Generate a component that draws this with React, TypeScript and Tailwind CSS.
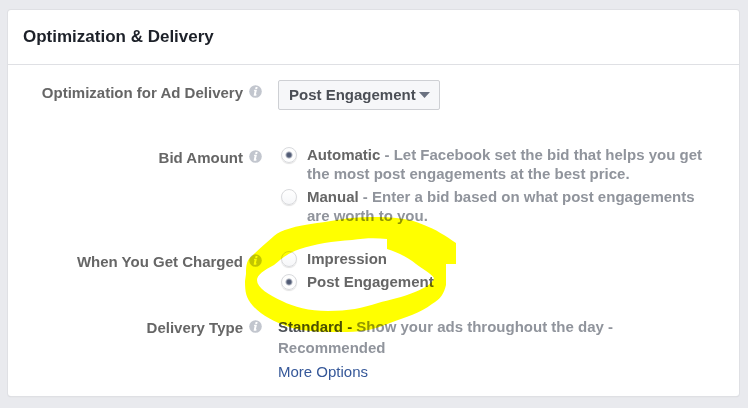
import type { ReactNode } from 'react'

function InfoIcon() {
  return (
    <svg viewBox="0 0 13 13" className="mb-[3px] h-[13px] w-[13px] shrink-0" aria-hidden="true">
      <circle cx="6.5" cy="6.5" r="6.3" fill="#c2c6ce" />
      <path d="M6.6 2h2l-.4 1.9h-2z M5.3 4.8h2.6L6.9 9.3h.7l-.3 1.4H4.6l1-4.6h-.6z" fill="#fff" />
    </svg>
  )
}

type RowProps = {
  label: ReactNode
  id: string
  className?: string
  children: ReactNode
}

function Row({ label, id, className = '', children }: RowProps) {
  return (
    <div className={`grid grid-cols-[254px_1fr] gap-4 ${className}`}>
      <div className="mt-[3px] flex h-[19px] items-center justify-end gap-[6px] text-[#666]">
        <span id={id}>{label}</span>
        <InfoIcon />
      </div>
      {children}
    </div>
  )
}

type OptionProps = {
  name: string
  value: string
  title: string
  text?: string
  checked?: boolean
}

function Option({ name, value, title, text, checked }: OptionProps) {
  return (
    <label className="flex items-start gap-[10px] text-[#90949c]">
      <input
        type="radio"
        name={name}
        value={value}
        defaultChecked={checked}
        className="mt-[2px] ml-[3px] h-4 w-4 shrink-0 appearance-none rounded-full border border-[#d9dadd] bg-linear-to-b from-white to-[#f6f7f9] shadow-[0_1px_1px_rgba(0,0,0,0.12)] checked:bg-[radial-gradient(circle,#4b5570_0,#566079_2px,#ffffff_4px,#f9fafb_100%)]"
      />
      <span className="max-w-[400px]">
        <span className="text-[#666]">{title}</span>
        {text && ` - ${text}`}
      </span>
    </label>
  )
}

// hand drawn marker around the charging options
function Highlight() {
  return (
    <svg
      viewBox="240 210 220 130"
      className="pointer-events-none absolute -top-[39px] left-[232px] h-[130px] w-[220px] mix-blend-multiply"
      aria-hidden="true"
    >
      <path
        fill="#ff0"
        fillRule="evenodd"
        d="M246 274C246 264 247 260 252 256C258 250 266 243 274 236C281 230 295 226 317 223C334 221 348 217 370 217C394 217 409 218 424 225C435 229 446 236 456 243V264H446V285C444 293 441 299 432 304C420 313 406 317 390 323C378 328 365 332 347 332C325 332 304 332 289 327C274 322 261 315 253 306C246 298 245 292 245 281Z
        M257 280C257 275 264 270 274 265C281 259 288 253 300 249C315 244 333 241 352 240C365 238 376 238 387 239V249C399 253 409 258 416 264C422 269 431 273 434 278C433 283 425 288 415 292C403 297 389 300 378 303C363 308 348 311 328 311C309 311 294 307 282 301C269 295 257 288 257 280Z"
      />
    </svg>
  )
}

export default function App() {
  return (
    <main className="min-h-screen bg-[#e9eaee] px-2 pt-[10px] pb-3 font-['Liberation_Sans',Arial,sans-serif] text-[15px] leading-[19px] font-bold">
      <section className="mr-[1px] rounded-[3px] bg-white shadow-[0_0_0_1px_#dfe0e4,0_1px_1px_#c8c9ce]">
        <header className="border-b border-[#dfe0e4] px-[15px] py-4">
          <h2 className="text-[17px] leading-[22px] text-[#1d2129]">Optimization &amp; Delivery</h2>
        </header>

        <form className="pt-[15px] pb-[14px]">
          <Row id="delivery-for" label="Optimization for Ad Delivery">
            <div className="relative w-fit">
              <select
                aria-labelledby="delivery-for"
                className="block h-[30px] w-[162px] appearance-none rounded-[2px] border border-[#ced0d4] bg-[#f6f7f9] pr-4 pb-px pl-[10px] text-[#4b4f56]"
              >
                <option>Post Engagement</option>
              </select>
              <svg viewBox="0 0 11 6" className="pointer-events-none absolute top-3 right-[10px] h-[6px] w-[11px]" aria-hidden="true">
                <path d="M0 0h11L5.5 6z" fill="#6a7180" />
              </svg>
            </div>
          </Row>

          <Row id="bid-amount" label="Bid Amount" className="mt-[35px]">
            <div role="radiogroup" aria-labelledby="bid-amount" className="flex flex-col gap-1">
              <Option
                name="bid"
                value="automatic"
                title="Automatic"
                text="Let Facebook set the bid that helps you get the most post engagements at the best price."
                checked
              />
              <Option
                name="bid"
                value="manual"
                title="Manual"
                text="Enter a bid based on what post engagements are worth to you."
              />
            </div>
          </Row>

          <Row id="charged" label="When You Get Charged" className="relative mt-6">
            <div role="radiogroup" aria-labelledby="charged" className="flex flex-col gap-1">
              <Option name="charge" value="impression" title="Impression" />
              <Option name="charge" value="engagement" title="Post Engagement" checked />
            </div>
            <Highlight />
          </Row>

          <Row id="delivery-type" label="Delivery Type" className="mt-6">
            <div className="pt-px leading-[21px] text-[#90949c]">
              <p className="max-w-[360px]">
                <span className="text-[#4b4f56]">Standard -</span> Show your ads throughout the day - Recommended
              </p>
              <a href="#more-options" className="mt-[3px] block w-fit font-normal text-[#365899]">
                More Options
              </a>
            </div>
          </Row>
        </form>
      </section>
    </main>
  )
}
